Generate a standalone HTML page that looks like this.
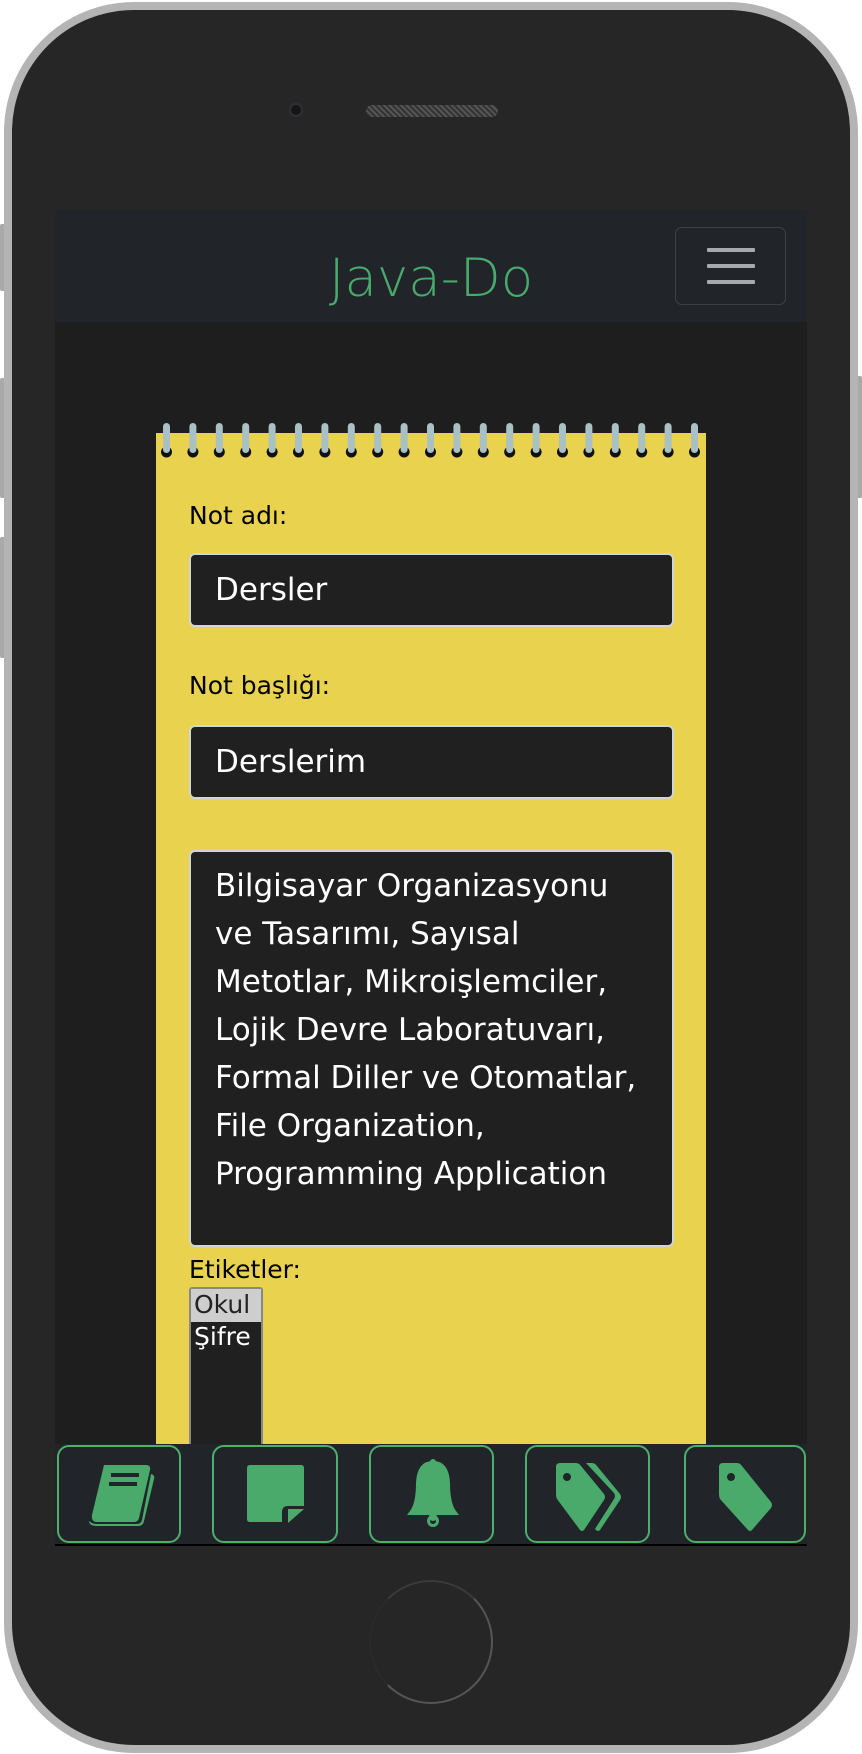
<!DOCTYPE html>
<html><head><meta charset="utf-8"><style>
*{margin:0;padding:0;box-sizing:border-box}
body{width:862px;height:1754px;background:#fff;position:relative;overflow:hidden;font-family:"DejaVu Sans","Liberation Sans",sans-serif}
.phone{position:absolute;left:4px;top:2px;width:854px;height:1751px;border-radius:130px;background:#b4b4b4}
.phone2{position:absolute;left:12px;top:10px;width:838px;height:1735px;border-radius:122px;background:#262626}
.sb{position:absolute;width:6px;background:#a9a9a9;border-radius:2px}
.screen{position:absolute;left:55px;top:210px;width:752px;height:1336px;background:#1e1e1e;overflow:hidden;border-bottom:2px solid #000}
.nav{position:absolute;left:0;top:0;width:752px;height:112px;background:#212529}
.title{position:absolute;left:0;width:752px;top:38px;text-align:center;font-size:53px;font-weight:300;color:#48aa6c;font-family:"DejaVu Sans",sans-serif}
.ham{position:absolute;left:620px;top:17px;width:111px;height:78px;border:1.5px solid #3c4146;border-radius:7px}
.ham i{position:absolute;left:31px;width:48px;height:4px;background:#a9a9a9;border-radius:1px}
.pad{position:absolute;left:101px;top:223px;width:550px;height:1100px;background:#e9d24e}
.lbl{position:absolute;left:33px;font-size:25px;color:#000}
.inp{position:absolute;left:33px;width:485px;height:74px;background:#202020;border:2px solid #cfd4d8;border-radius:6px;color:#fff;font-size:31px;line-height:70px;padding:0 0 0 24px}
.ta{position:absolute;left:33px;top:417px;width:485px;height:397px;background:#202020;border:2px solid #cfd4d8;border-radius:6px;color:#fff;font-size:31px;line-height:48px;padding:10px 0 0 24px;white-space:pre}
.sel{position:absolute;left:33px;top:854px;width:74px;height:160px;background:#202020;border:2px solid #888;border-radius:3px;font-size:25px;color:#fff}
.bar{position:absolute;left:0;top:1234px;width:752px;height:100px;background:#212529}
.btn{position:absolute;top:1px;height:98px;border:2px solid #4caf6a;border-radius:12px}
.btn svg{position:absolute;left:0;top:0}
</style></head><body>
<div class="sb" style="left:0;top:224px;height:67px"></div>
<div class="sb" style="left:0;top:378px;height:120px"></div>
<div class="sb" style="left:0;top:537px;height:121px"></div>
<div class="sb" style="left:856px;top:376px;height:122px"></div>
<div class="phone"></div>
<div class="phone2"></div>
<div style="position:absolute;left:289px;top:103px;width:14px;height:14px;border-radius:50%;background:#151515;border:2px solid #2f2f35"></div>
<div style="position:absolute;left:366px;top:105px;width:132px;height:12px;border-radius:6px;background:repeating-linear-gradient(45deg,#555 0 2px,#333 2px 4px)"></div>
<div style="position:absolute;left:369px;top:1580px;width:124px;height:124px;border-radius:50%;border:2px solid #555;border-left-color:#2a2a2a;border-top-color:#3a3a3a"></div>
<div class="screen">
 <div class="nav"><div class="title">Java-Do</div>
  <div class="ham"><i style="top:20px"></i><i style="top:36px"></i><i style="top:52px"></i></div></div>
 <div class="pad">
  <div class="lbl" style="top:68px">Not adı:</div>
  <div class="inp" style="top:120px">Dersler</div>
  <div class="lbl" style="top:238px">Not başlığı:</div>
  <div class="inp" style="top:292px">Derslerim</div>
  <div class="ta">Bilgisayar Organizasyonu
ve Tasarımı, Sayısal
Metotlar, Mikroişlemciler,
Lojik Devre Laboratuvarı,
Formal Diller ve Otomatlar,
File Organization,
Programming Application</div>
  <div class="lbl" style="top:822px">Etiketler:</div>
  <div class="sel"><div style="background:#cecece;color:#222;padding:1px 0 0 3px;height:33px">Okul</div><div style="padding:0 0 0 3px">Şifre</div></div>
 </div>
 <div class="bar">
  <div class="btn" style="left:2px;width:124px"><svg width="124" height="98" viewBox="0 0 124 98"><g fill="#4aaa6c"><path d="M45 18h42q5 0 4 5l-11 48q-1 4-5 4H38q-6 0-5-7z"/><path d="M92 27q4 1 3 5l-10 42q-1 5-6 5H38q-8 0-8-5 3 3 8 3h40q4 0 5-4z"/><rect x="52" y="26" width="28" height="4" fill="#212529"/><rect x="50" y="35" width="28" height="4" fill="#212529"/></g></svg></div>
  <div class="btn" style="left:157px;width:126px"><svg width="126" height="98" viewBox="0 0 126 98"><g fill="#4aaa6c"><path d="M33 21q0-3 3-3h51q3 0 3 3v38H74q-6 0-6 6v10H36q-3 0-3-3z"/><path d="M74 62h16l-16 14z"/></g></svg></div>
  <div class="btn" style="left:314px;width:125px"><svg width="125" height="98" viewBox="0 0 125 98"><g fill="#4aaa6c"><circle cx="62" cy="15" r="3"/><path d="M62 14q-16 0-17 22q0 20-6 28l-3 4h52l-3-4q-6-8-6-28q-1-22-17-22z"/><circle cx="62" cy="74" r="6"/><circle cx="62" cy="74" r="3" fill="#212529"/><circle cx="62" cy="70" r="4"/></g></svg></div>
  <div class="btn" style="left:470px;width:125px"><svg width="125" height="98" viewBox="0 0 125 98"><g fill="#4aaa6c"><path d="M29 20q0-4 4-4h16q3 0 5 3l23 28q2 3 0 6L57 83q-2 2-4 0L30 52q-1-2-1-5z"/><path d="M59 16h6q3 0 5 3l23 28q2 3 0 6L73 83q-2 2-4 0l-1-1 19-30q2-3 0-6z"/><circle cx="40" cy="30" r="4" fill="#212529"/></g></svg></div>
  <div class="btn" style="left:629px;width:122px"><svg width="122" height="98" viewBox="0 0 122 98"><g fill="#4aaa6c"><path d="M33 20q0-4 4-4h14q3 0 5 3l29 36q2 3 0 6L66 83q-2 2-4 0L34 52q-1-2-1-5z"/><circle cx="45" cy="30" r="4" fill="#212529"/></g></svg></div>
 </div>
</div>
<div style="position:absolute;left:160px;top:421px;width:560px;height:40px">
<svg width="560" height="40">
<defs><g id="s"><circle cx="6.5" cy="31" r="5.5" fill="#111"/><rect x="3" y="2" width="7" height="30" rx="3.5" fill="#a9c0c4"/></g></defs>
<use href="#s" x="0"/><use href="#s" x="26.4"/><use href="#s" x="52.8"/><use href="#s" x="79.2"/><use href="#s" x="105.6"/><use href="#s" x="132"/><use href="#s" x="158.4"/><use href="#s" x="184.8"/><use href="#s" x="211.2"/><use href="#s" x="237.6"/><use href="#s" x="264"/><use href="#s" x="290.4"/><use href="#s" x="316.8"/><use href="#s" x="343.2"/><use href="#s" x="369.6"/><use href="#s" x="396"/><use href="#s" x="422.4"/><use href="#s" x="448.8"/><use href="#s" x="475.2"/><use href="#s" x="501.6"/><use href="#s" x="528"/>
</svg></div>
</body></html>
